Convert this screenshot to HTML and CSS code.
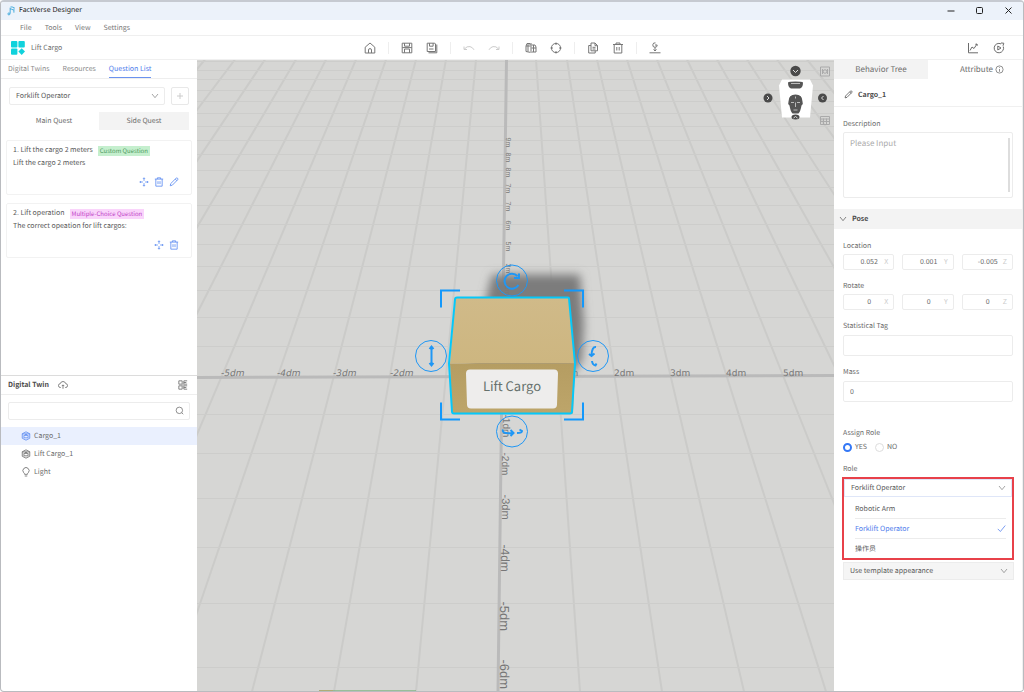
FILE: index.html
```html
<!DOCTYPE html>
<html lang="en">
<head>
<meta charset="utf-8">
<title>FactVerse Designer</title>
<link rel="stylesheet" href="styles.css">
</head>
<body>
<svg class="sprite" aria-hidden="true">
  <symbol id="i-move" viewBox="0 0 12 12"><path d="M6 1v3.600M6 7.400V11M1 6h3.600M7.400 6H11M4.800 2.200 6 1l1.200 1.200M4.800 9.800 6 11l1.200-1.200M2.200 4.800 1 6l1.200 1.200M9.800 4.800 11 6 9.800 7.200"/></symbol>
  <symbol id="i-trash" viewBox="0 0 12 12"><path d="M1 2.500h10M4 2.500V1h4v1.500M2.200 2.500V11h7.600V2.500M4.800 5v3.500M7.200 5v3.500"/></symbol>
  <symbol id="i-pen" viewBox="0 0 12 12"><path d="M1.500 10.500 2 8 8.500 1.500q1-.8 1.800 0 .9.900.1 1.800L4 9.800zM7.500 2.500l2 2"/></symbol>
  <symbol id="i-down" viewBox="0 0 12 12"><path d="M1.500 3 6 8.500 10.500 3"/></symbol>
  <symbol id="i-cube" viewBox="0 0 12 12"><path d="M6 1 10.500 3.300v5.400L6 11 1.500 8.700V3.300zM1.500 3.500h9M3.500 5.200h5v3h-5zM5 5.200 6 3.500l1 1.700"/></symbol>
</svg>
<div class="window">
  <header class="titlebar">
    <svg class="ico app" viewBox="0 0 12 12"><path d="M5.500 1q3 0 5 1.500M5 3.500q2 0 4 1.500M5 2v7M9.500 3v5"/><circle cx="3.500" cy="9.500" r="1.200"/></svg>
    <span class="title">FactVerse Designer</span>
    <div class="wincontrols">
      <button aria-label="Minimize"><svg class="ico" viewBox="0 0 12 12"><path d="M2.500 6h7"/></svg></button>
      <button aria-label="Maximize"><svg class="ico" viewBox="0 0 12 12"><rect x="2.500" y="2.500" width="6" height="6" rx="1"/></svg></button>
      <button aria-label="Close"><svg class="ico" viewBox="0 0 12 12"><path d="m2.500 2.500 6 6M8.500 2.500l-6 6"/></svg></button>
    </div>
  </header>
  <nav class="menubar"><button>File</button><button>Tools</button><button>View</button><button>Settings</button></nav>
  <div class="toolbar">
    <div class="project">
      <svg class="logo" viewBox="0 0 14 14"><rect width="6.400" height="6.400" rx="1"/><rect x="7.400" width="6.400" height="6.400" rx="1"/><rect y="7.400" width="6.400" height="6.400" rx="1"/><path d="m10.700 7.200 3.300 3.400-3.300 3.400-3.300-3.400z"/></svg>
      <span>Lift Cargo</span>
    </div>
    <div class="tools">
      <div class="group"><button aria-label="Home"><svg class="ico" viewBox="0 0 12 12"><path d="M1.200 11V5.200L6 1l4.800 4.200V11zM4.500 11V8q0-1.400 1.500-1.400T7.500 8v3"/></svg></button></div>
      <div class="group">
        <button aria-label="Save"><svg class="ico" viewBox="0 0 12 12"><path d="M1.200 1.200h9.600v9.600H1.200zM3.500 1.200v3h5v-3M3.500 10.800V7h5v3.800M1.200 5.600h9.600"/></svg></button>
        <button aria-label="Save as"><svg class="ico" viewBox="0 0 12 12"><path d="M1.200 1.200h7.600l.7.700v7.600H1.200zM3.500 1.200v3h3.600v-3M3 7h4.500M10.800 2.500v8.300H2.500"/></svg></button>
      </div>
      <div class="group faded">
        <button aria-label="Undo" disabled><svg class="ico" viewBox="0 0 12 12"><path d="M1 4.500v3h3M1.200 7.200Q4 3.800 7 4.600q2.700.700 4 3.200"/></svg></button>
        <button aria-label="Redo" disabled><svg class="ico" viewBox="0 0 12 12"><path d="M11 4.500v3H8M10.800 7.200Q8 3.800 5 4.600 2.300 5.300 1 7.800"/></svg></button>
      </div>
      <div class="group">
        <button aria-label="Align"><svg class="ico" viewBox="0 0 12 12"><path d="M5 3V1.500H2L1 4v5.500l4 .8M1 4h4.500M3 2v7.500M6 1v10M6.500 3H10l1 2v5H7M8.500 3v7M6.500 6H11"/></svg></button>
        <button aria-label="Focus"><svg class="ico" viewBox="0 0 12 12"><circle cx="6" cy="6" r="4.600"/><path d="M6 .5v2.500M6 9v2.500M.5 6H3M9 6h2.500"/></svg></button>
      </div>
      <div class="group">
        <button aria-label="Copy"><svg class="ico" viewBox="0 0 12 12"><path d="M4 1h4l2.500 2.500v5.300H4zM8 1v2.700h2.500M5.500 5.300h3M5.500 7h3M4 3.500H1.700V11h6.500V8.800"/></svg></button>
        <button aria-label="Delete"><svg class="ico"><use href="#i-trash"/></svg></button>
      </div>
      <div class="group"><button aria-label="Drop to ground"><svg class="ico" viewBox="0 0 12 12"><path d="M8.200 3A2.200 2.200 0 1 1 6.500.900M6 3h2.200M6 5.200V9M4.500 7.500 6 9l1.500-1.500M.5 10.800h11"/></svg></button></div>
    </div>
    <div class="right-tools">
      <button aria-label="Statistics"><svg class="ico" viewBox="0 0 12 12"><path d="M1.500 1v9.800H11M3 8.500 5 5l2 1.500L10 2M8.300 2.300 10 2l.3 1.700"/></svg></button>
      <button aria-label="Run"><svg class="ico" viewBox="0 0 12 12"><path d="M10.300 4.500A4.700 4.700 0 1 1 8 1.900M8 1l2.800.2L10 3.800M4.800 4v4L8 6z"/></svg></button>
    </div>
  </div>

  <main class="workspace">
    <aside class="left">
      <section class="quests">
        <div class="tabs"><button>Digital Twins</button><button>Resources</button><button class="active">Question List</button></div>
        <div class="filter">
          <div class="picker"><select aria-label="Role filter"><option>Forklift Operator</option></select><svg class="ico"><use href="#i-down"/></svg></div>
          <button class="add" aria-label="Add question"><svg class="ico" viewBox="0 0 12 12"><path d="M6 3v6M3 6h6"/></svg></button>
        </div>
        <div class="switch"><button>Main Quest</button><button class="on">Side Quest</button></div>
        <article class="card">
          <h3>1. Lift the cargo 2 meters <span class="tag green">Custom Question</span></h3>
          <p>Lift the cargo 2 meters</p>
          <div class="actions">
            <button aria-label="Move"><svg class="ico"><use href="#i-move"/></svg></button>
            <button aria-label="Delete"><svg class="ico"><use href="#i-trash"/></svg></button>
            <button aria-label="Edit"><svg class="ico"><use href="#i-pen"/></svg></button>
          </div>
        </article>
        <article class="card">
          <h3>2. Lift operation <span class="tag pink">Multiple-Choice Question</span></h3>
          <p>The correct opeation for lift cargos:</p>
          <div class="actions">
            <button aria-label="Move"><svg class="ico"><use href="#i-move"/></svg></button>
            <button aria-label="Delete"><svg class="ico"><use href="#i-trash"/></svg></button>
          </div>
        </article>
      </section>
      <section class="twins">
        <div class="twinhead">
          <h2>Digital Twin</h2>
          <svg class="ico" viewBox="0 0 12 12"><path d="M3.500 9H3a2.300 2.300 0 0 1-.3-4.600 3.400 3.400 0 0 1 6.600 0A2.300 2.300 0 0 1 9 9h-.5M6 10.500V6M4.500 7.300 6 5.800l1.500 1.500"/></svg>
          <button aria-label="Layout"><svg class="ico" viewBox="0 0 12 12"><path d="M1 1h4v4H1zM1 7h4v4H1zM11 1H7v4h4M7 3h3M11 7H7v4h4M7 9h3M5 6h2"/></svg></button>
        </div>
        <div class="search"><input type="text" aria-label="Search twins"><svg class="ico" viewBox="0 0 12 12"><circle cx="5.800" cy="5.800" r="4.300"/><path d="m9 9 2 2"/></svg></div>
        <ul class="tree">
          <li class="sel"><svg class="ico"><use href="#i-cube"/></svg>Cargo_1</li>
          <li><svg class="ico"><use href="#i-cube"/></svg>Lift Cargo_1</li>
          <li><svg class="ico" viewBox="0 0 12 12"><path d="M4.300 8.800Q4.300 7.600 3.200 6.800a3.700 3.700 0 1 1 5.600 0Q7.700 7.600 7.700 8.800zM4.500 10.800h3"/></svg>Light</li>
        </ul>
      </section>
    </aside>

    <section class="viewport" aria-label="Scene">
      <svg class="scene" viewBox="197 60 637 632" preserveAspectRatio="xMidYMid slice">
        <defs>
          <filter id="soft" x="-20%" y="-20%" width="140%" height="140%"><feGaussianBlur stdDeviation="5"/></filter>
          <linearGradient id="top" x1="0" y1="0" x2="0" y2="1"><stop offset="0" stop-color="#d0ba89"/><stop offset="1" stop-color="#cdb680"/></linearGradient>
          <linearGradient id="front" x1="0" y1="0" x2="0" y2="1"><stop offset="0" stop-color="#b59d62"/><stop offset="1" stop-color="#bda56a"/></linearGradient>
        </defs>
        <path class="ground" d="M197 60h637v632H197z"/>
        <path class="cols" d="M145 60-487 692M175 60-405 692M205 60-323 692M235 60-241 692M265 60-159 692M296 60-77 692M326 60 5 692M356 60 88 692M386 60 170 692M416 60 252 692M446 60 334 692M476 60 416 692M536 60 580 692M567 60 662 692M597 60 744 692M627 60 826 692M657 60 909 692M687 60 991 692M717 60 1073 692M747 60 1155 692M777 60 1237 692M807 60 1319 692M837 60 1401 692"/>
        <path class="rows" d="M197 62h637M197 71h637M197 80h637M197 91h637M197 102h637M197 114h637M197 127h637M197 141h637M197 155h637M197 171h637M197 188h637M197 206h637M197 225h637M197 245h637M197 267h637M197 291h637M197 318h637M197 347h637M197 415h637M197 454h637M197 499h637M197 548h637M197 604h637M197 668h637"/>
        <path class="axis" d="M197 378 834 376M506.500 60 502 379 498 692"/>
        <path d="M319 691.500h97" stroke="#5ea65f"/><path d="M319 691.500h14" stroke="#c49a55"/>
        <g class="xlabels">
          <text class="lean" x="221" y="376">-5dm</text><text class="lean" x="277" y="376">-4dm</text><text class="lean" x="333" y="376">-3dm</text><text class="lean" x="390" y="376">-2dm</text>
          <text x="558" y="376">1dm</text><text x="614" y="376">2dm</text><text x="670" y="376">3dm</text><text x="726" y="376">4dm</text><text x="783" y="376">5dm</text>
        </g>
        <g class="farlabels">
          <text transform="translate(506 138) rotate(90)">9m</text><text transform="translate(506 153) rotate(90)">8m</text><text transform="translate(506 168) rotate(90)">8m</text><text transform="translate(506 184) rotate(90)">7m</text><text transform="translate(506 202) rotate(90)">7m</text><text transform="translate(506 221) rotate(90)">6m</text><text transform="translate(506 242) rotate(90)">5m</text>
        </g>
        <path class="shadow" filter="url(#soft)" d="M492 275h88l4 50-2 36-16 20H466z"/>
        <g class="farlabels"><text transform="translate(506 264) rotate(90)">3m</text><text transform="translate(505 286) rotate(90)">2m</text></g>
        <g class="ylabels">
          <text font-size="10" transform="translate(503 415) rotate(90)">-1dm</text><text font-size="10" transform="translate(502 453) rotate(90)">-2dm</text><text font-size="11" transform="translate(502 495) rotate(90)">-3dm</text><text font-size="12" transform="translate(501 545) rotate(90)">-4dm</text><text font-size="13" transform="translate(500 602) rotate(90)">-5dm</text><text font-size="13" transform="translate(500 660) rotate(90)">-6dm</text>
        </g>
        <path fill="url(#top)" d="M455 298h114l6 66H450z"/>
        <path fill="url(#front)" d="M450 364h125l-2 50H452z"/>
        <path class="outline" d="M457 298h111q1 0 1 1l6 65-3 48q0 2-2 2H454q-2 0-2-2l-3-48 6-64q0-2 2-2z"/>
        <path class="plate" d="M470 370h84q4 0 4 4l-1 31q0 4-4 4h-82q-4 0-4-4l-1-31q0-4 4-4z"/>
        <text class="cargo" x="512" y="391">Lift Cargo</text>
        <path class="corner" d="M441 308v-17H460M564 291h19V308M441 403v17H460M564 420h19V403"/>
        <g class="handle">
          <circle cx="512" cy="281" r="15.500"/><circle cx="431" cy="356.500" r="15.500"/><circle cx="593" cy="356.500" r="15.500"/><circle cx="512" cy="432" r="15.500"/>
          <g class="thick"><path d="M518.500 285.500a7.500 7.500 0 1 1-1-9M519 274v4.500h-5M431.500 348v17M429.500 349.500l2-2.500 2 2.500M429.500 363.500l2 2.500 2-2.500M596 347.500q-4-.5-4.500 8M589 354.500l2.500 2 3-2.500M592 361.500q.5 4 3.500 4.500l1-2M503 430q-1 3 3 3.500 3 .5 7 0M510.500 430.500l3 3-3 3M517 433.500q5 0 5-2l-2.500-1.500"/></g>
        </g>
        <g class="nav">
          <path class="face" d="M782 80h28l3 6-3 32h-28l-3-32z"/>
          <path class="head" d="M788 83q1-1 7.500-1t7.500 1q0 5-3 6h-9q-3-1-3-6zM788.500 102q0-7 7-7t7 7q1 2-1 4-1 6-3 8h-6q-2-2-3-8-2-2-1-4z"/>
          <path class="feat" d="M791 103h3M797 103h3M795.500 103v4.500M793.500 110.500h4M791 84h9M795.500 97v2"/>
          <circle cx="795.500" cy="71.500" r="5.200"/><circle cx="768" cy="98.500" r="4.500"/><circle cx="822.500" cy="98.500" r="4.500"/><ellipse cx="795.500" cy="117.500" rx="4" ry="2.500"/>
          <path class="chev" d="m793 70.500 2.500 2.500 2.500-2.500M767 96.500l2 2-2 2M823.500 96.500l-2 2 2 2M793.500 118.500l2-1.500 2 1.500"/>
          <path class="minor" d="M820.500 67.500h9v9h-9zM820.500 117h9v8h-9zM820.500 119.500h9M820.500 122h9M823.500 119v6M826.500 119v6M822.500 69.500v5M827.500 69.500v5"/><circle class="minor" cx="825" cy="72" r="1.800"/>
        </g>
      </svg>
    </section>

    <aside class="props">
      <div class="modes"><button class="on">Behavior Tree</button><button>Attribute <svg class="ico" viewBox="0 0 12 12"><circle cx="6" cy="6" r="4.800"/><path d="M6 5.300V9M6 3v1"/></svg></button></div>
      <div class="name"><svg class="ico"><use href="#i-pen"/></svg><strong>Cargo_1</strong></div>
      <div class="field desc"><label for="desc">Description</label><div class="area"><textarea id="desc" placeholder="Please Input"></textarea><i></i></div></div>
      <button class="fold"><svg class="ico"><use href="#i-down"/></svg>Pose</button>
      <fieldset class="field"><legend>Location</legend><div class="xyz">
        <label><input type="text" value="0.052"><span>X</span></label><label><input type="text" value="0.001"><span>Y</span></label><label><input type="text" value="-0.005"><span>Z</span></label>
      </div></fieldset>
      <fieldset class="field"><legend>Rotate</legend><div class="xyz">
        <label><input type="text" value="0"><span>X</span></label><label><input type="text" value="0"><span>Y</span></label><label><input type="text" value="0"><span>Z</span></label>
      </div></fieldset>
      <div class="field single"><label for="tag">Statistical Tag</label><input class="box" id="tag" type="text"></div>
      <div class="field single"><label for="mass">Mass</label><input class="box" id="mass" type="text" value="0"></div>
      <fieldset class="field assign"><legend>Assign Role</legend><div class="radios"><label><input type="radio" name="assign" checked>YES</label><label><input type="radio" name="assign">NO</label></div></fieldset>
      <div class="field role"><label for="role">Role</label>
        <div class="marked">
          <div class="picker"><select id="role"><option>Forklift Operator</option></select><svg class="ico"><use href="#i-down"/></svg></div>
          <ul class="options" role="listbox" aria-label="Role">
            <li role="option">Robotic Arm</li>
            <li role="option" aria-selected="true">Forklift Operator<svg class="ico" viewBox="0 0 12 12"><path d="M1 6.500 4.500 10 11 2"/></svg></li>
            <li role="option" lang="zh">操作员</li>
          </ul>
        </div>
        <div class="picker muted"><select aria-label="Appearance"><option>Use template appearance</option></select><svg class="ico"><use href="#i-down"/></svg></div>
      </div>
    </aside>
  </main>
</div>
</body>
</html>
```
FILE: styles.css
```css
* { box-sizing: border-box; }
body { margin: 0; font: 7px/12px "Noto Sans CJK SC", "Noto Sans", sans-serif; color: #6c6c6c; background: #fff; text-rendering: geometricPrecision; }
button, input, select, textarea { font: inherit; color: inherit; text-rendering: inherit; background: none; border: 0; padding: 0; margin: 0; outline: 0; min-width: 0; }
h2, h3, p, ul, fieldset { margin: 0; padding: 0; border: 0; font: inherit; min-width: 0; }
legend { padding: 0; }
ul { list-style: none; }
.sprite { position: absolute; width: 0; height: 0; }
.ico { display: block; width: 12px; height: 12px; flex: none; fill: none; stroke: currentColor; stroke-width: 1; }
.window { height: 100vh; display: flex; flex-direction: column; border: 1px solid #b9bbbf; border-top: 2px solid #c6cad1; border-radius: 4px; overflow: hidden; }

.titlebar { display: flex; align-items: center; flex: none; height: 18px; padding: 0 8px 0 5px; background: #ecf2fa; color: #222; font: 7px/16px "Noto Sans", sans-serif; }
.app { width: 10px; height: 10px; color: #2aa0d8; margin-right: 3px; }
.wincontrols { margin-left: auto; display: flex; gap: 17px; }
.menubar { display: flex; flex: none; height: 16px; padding-left: 19px; gap: 13px; border-bottom: 1px solid #efefef; color: #777; }
.toolbar { display: grid; grid-template-columns: 1fr auto 1fr; align-items: center; flex: none; height: 24px; border-bottom: 1px solid #f0f0f0; }
.project { display: flex; align-items: center; gap: 6px; padding-left: 10px; }
.logo { width: 14px; height: 14px; fill: #10d2dc; }
.tools { display: flex; color: #777; }
.group { display: flex; gap: 13px; padding: 0 12px; }
.group + .group { border-left: 1px solid #eee; }
.faded { color: #ccc; }
.right-tools { display: flex; justify-content: flex-end; gap: 14px; padding-right: 18px; }

.workspace { flex: 1; min-height: 0; display: grid; grid-template-columns: 196px 1fr 189px; }
.left { display: grid; grid-template-rows: 1fr 1fr; min-height: 0; }
.tabs { display: flex; gap: 13px; height: 19px; padding-left: 7px; border-bottom: 1px solid #eee; color: #8c8c8c; }
.tabs button { border-bottom: 1px solid transparent; }
.tabs .active { color: #4f7cec; border-color: #6b92ef; }
.filter { display: flex; gap: 6px; padding: 8px 8px 0; }
.picker { display: flex; align-items: center; flex: 1; height: 18px; border: 1px solid #ececec; border-radius: 2px; padding: 0 5px 0 6px; color: #5a5a5a; }
.picker select { flex: 1; appearance: none; }
.picker .ico { width: 8px; height: 8px; color: #777; pointer-events: none; }
.add { display: grid; place-items: center; width: 18px; height: 18px; border: 1px solid #e8e8e8; border-radius: 2px; color: #ccc; }
.switch { display: grid; grid-template-columns: 1fr 1fr; height: 18px; margin: 7px 8px 10px; }
.switch .on { background: #f3f3f3; }
.card { margin: 0 5px 8px; padding: 3px 7px 5px 6px; height: 55px; border: 1px solid #f2f2f2; border-radius: 2px; color: #5a5a5a; }
.card h3 { display: flex; align-items: center; gap: 5px; line-height: 13px; }
.card p { line-height: 13px; }
.tag { padding: 0 2px; font-size: 6px; line-height: 10px; }
.green { background: #c5efce; color: #4f9a60; }
.pink { background: #fad4fb; color: #bf45c6; }
.actions { display: flex; justify-content: flex-end; gap: 5px; padding: 7px 5px 0; color: #5b8bf0; }
.actions .ico { width: 10px; height: 10px; }
.twins { margin-top: -1px; }
.twinhead { display: flex; align-items: center; gap: 9px; height: 20px; padding: 0 9px 0 7px; border-top: 1px solid #dcdcdc; border-bottom: 1px solid #eee; }
.twinhead h2 { font-weight: 700; color: #4c4c4c; }
.twinhead .ico { width: 10px; height: 10px; }
.twinhead button { margin-left: auto; }
.search { display: flex; align-items: center; height: 18px; margin: 7px; padding-right: 5px; border: 1px solid #ececec; border-radius: 2px; }
.search input { flex: 1; }
.search .ico { width: 9px; height: 9px; }
.tree li { display: flex; align-items: center; gap: 3px; height: 18px; padding-left: 20px; }
.tree .ico { width: 10px; height: 10px; }
.sel { background: #eaf0fe; }
.sel .ico { color: #5b8bf0; }

.viewport { min-width: 0; min-height: 0; overflow: hidden; background: #d6d6d4; }
.scene { display: block; width: 100%; height: 100%; }
.scene path { fill: none; }
.scene .ground { fill: #d6d6d4; }
.cols { stroke: #cbcbc9; stroke-width: 2; }
.rows { stroke: #cdcdcb; stroke-width: 1; }
.axis { stroke: #bababa; stroke-width: 3; }
.xlabels { font: 9px "DejaVu Sans", sans-serif; fill: #777; }
.lean { font-style: italic; }
.farlabels { font: 7px "Liberation Sans", sans-serif; fill: #777; }
.ylabels { font-family: "Liberation Sans", sans-serif; fill: #777; }
.scene .shadow { fill: #7c7c7c; }
.scene path[fill="url(#top)"] { fill: url(#top); }
.scene path[fill="url(#front)"] { fill: url(#front); }
.outline { stroke: #05c8fa; stroke-width: 2; }
.scene .plate { fill: #eeedec; }
.cargo { font: 13px "Noto Sans CJK SC", sans-serif; fill: #66716c; text-anchor: middle; }
.corner { stroke: #1398fb; stroke-width: 2; }
.handle { fill: none; stroke: #1f97f5; stroke-width: 1; }
.thick { stroke-width: 2; }
.nav circle, .nav ellipse { fill: #4a4a4a; }
.scene .face { fill: #fff; }
.scene .head { fill: #555; }
.feat { stroke: #bbb; }
.chev { stroke: #ddd; }
.minor { stroke: #aaa; }
.nav circle.minor { fill: none; }

.props { display: flex; flex-direction: column; border-right: 1px solid #f0f0f0; min-height: 0; }
.modes { display: grid; grid-template-columns: 1fr 1fr; flex: none; height: 19px; font-size: 8px; }
.modes button { display: flex; align-items: center; justify-content: center; gap: 2px; }
.modes button + button { justify-content: flex-end; padding-right: 18px; }
.modes .ico { width: 9px; height: 9px; }
.modes .on { background: #f3f3f3; }
.name { display: flex; align-items: center; gap: 5px; flex: none; height: 28px; padding: 4px 10px 0; border-bottom: 1px solid #f0f0f0; color: #4c4c4c; }
.name .ico { width: 9px; height: 9px; }
.field { flex: none; padding: 0 9px; margin-bottom: 10px; }
.field > label, legend { display: block; height: 14px; }
.field.single > label { height: 15px; }
.field.desc { margin: 11px 0; }
.area { display: flex; height: 66px; padding: 5px 2px 5px 6px; border: 1px solid #ececec; border-radius: 2px; font-size: 8px; }
.area textarea { flex: 1; resize: none; }
.area i { width: 2px; background: #ddd; }
::placeholder { color: #aaa; opacity: 1; }
.fold { display: flex; align-items: center; gap: 5px; flex: none; height: 20px; margin-bottom: 11px; padding-left: 5px; background: #f3f3f3; font-weight: 700; color: #4c4c4c; }
.fold .ico { width: 8px; height: 8px; }
.xyz { display: grid; grid-template-columns: 1fr 1fr 1fr; gap: 8px; }
.xyz label { display: flex; align-items: center; height: 16px; padding: 0 5px 0 10px; border: 1px solid #ececec; border-radius: 2px; }
.xyz input { flex: 1; width: 0; text-align: center; }
.xyz span { color: #ccc; }
.box { display: block; width: 100%; height: 21px; padding: 0 6px; border: 1px solid #ececec; border-radius: 2px; }
.field.assign { margin: 15px 0 10px; }
.radios { display: flex; gap: 8px; }
.radios label { display: flex; align-items: center; gap: 3px; height: 12px; }
.radios input { appearance: none; width: 9px; height: 9px; border: 1px solid #ddd; border-radius: 50%; }
.radios input:checked { border: 2px solid #3478f6; }
.role { padding: 0 8px; }
.role > label { padding-left: 1px; }
.marked { border: 2px solid #e8414a; background: #fff; }
.role .picker { padding: 0 5px 0 6px; border-color: #dfe6f8; border-radius: 0; }
.options { padding: 2px 6px 0 11px; color: #5a5a5a; }
.options li { display: flex; justify-content: space-between; align-items: center; height: 20px; border-bottom: 1px solid #ececec; }
.options li:last-child { border: 0; height: 19px; }
.options .ico { width: 9px; height: 9px; }
.options [aria-selected] { color: #4f7cec; }
.role .picker.muted { margin: 2px 0 0 1px; background: #f5f5f5; border-color: #ececec; }
```
